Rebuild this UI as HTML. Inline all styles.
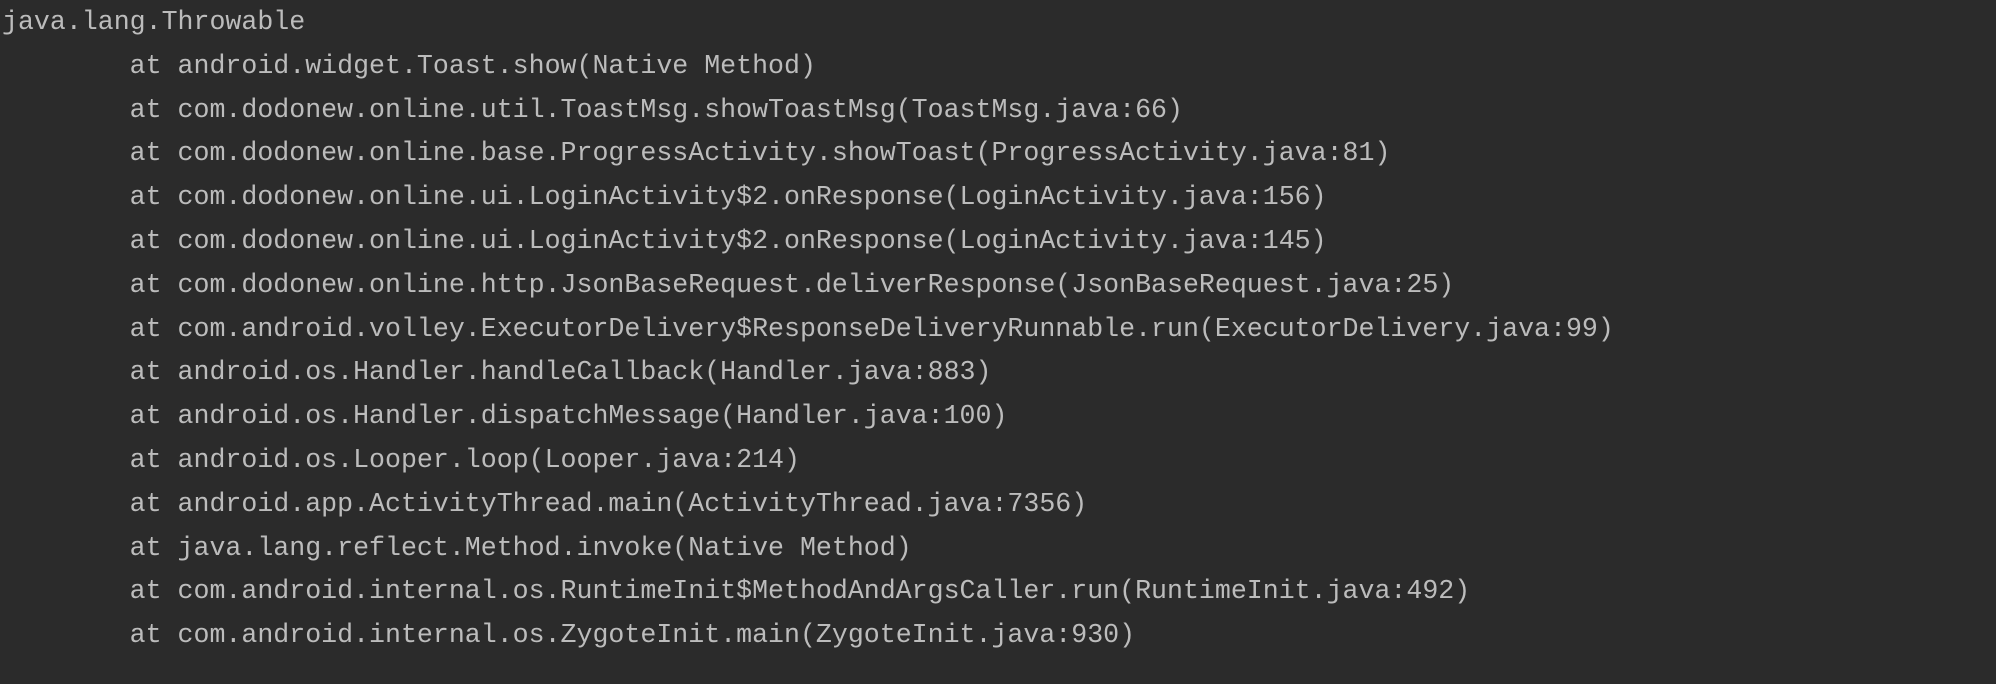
<!DOCTYPE html>
<html><head><meta charset="utf-8"><style>
html,body{margin:0;padding:0;background:#2b2b2b;width:1996px;height:684px;overflow:hidden}
pre{margin:0;padding:1px 0 0 2px;font-family:"Liberation Mono",monospace;font-size:26.6px;line-height:43.8px;color:#bcbcbc;white-space:pre}
</style></head><body><pre>java.lang.Throwable
        at android.widget.Toast.show(Native Method)
        at com.dodonew.online.util.ToastMsg.showToastMsg(ToastMsg.java:66)
        at com.dodonew.online.base.ProgressActivity.showToast(ProgressActivity.java:81)
        at com.dodonew.online.ui.LoginActivity$2.onResponse(LoginActivity.java:156)
        at com.dodonew.online.ui.LoginActivity$2.onResponse(LoginActivity.java:145)
        at com.dodonew.online.http.JsonBaseRequest.deliverResponse(JsonBaseRequest.java:25)
        at com.android.volley.ExecutorDelivery$ResponseDeliveryRunnable.run(ExecutorDelivery.java:99)
        at android.os.Handler.handleCallback(Handler.java:883)
        at android.os.Handler.dispatchMessage(Handler.java:100)
        at android.os.Looper.loop(Looper.java:214)
        at android.app.ActivityThread.main(ActivityThread.java:7356)
        at java.lang.reflect.Method.invoke(Native Method)
        at com.android.internal.os.RuntimeInit$MethodAndArgsCaller.run(RuntimeInit.java:492)
        at com.android.internal.os.ZygoteInit.main(ZygoteInit.java:930)</pre></body></html>
